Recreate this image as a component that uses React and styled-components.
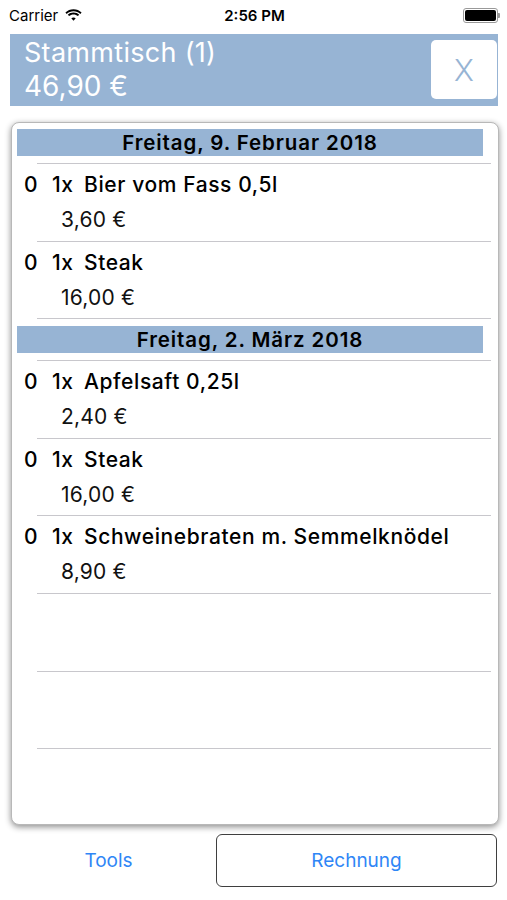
import React from 'react'
import styled, { createGlobalStyle } from 'styled-components'

const GlobalStyle = createGlobalStyle`
  body {
    margin: 0;
    background: #ffffff;
    font-family: Inter, "Liberation Sans", sans-serif;
  }
`;

const BLUE = "#97b4d4";

const sections = [
  {
    date: "Freitag, 9. Februar 2018",
    items: [
      { name: "Bier vom Fass 0,5l", price: "3,60 €" },
      { name: "Steak", price: "16,00 €" },
    ],
  },
  {
    date: "Freitag, 2. März 2018",
    items: [
      { name: "Apfelsaft 0,25l", price: "2,40 €" },
      { name: "Steak", price: "16,00 €" },
      { name: "Schweinebraten m. Semmelknödel", price: "8,90 €" },
    ],
    empty: 3,
  },
];

const App = () => {
  return (
    <Screen>
      <GlobalStyle />
      <StatusBar>
        <Carrier>
          Carrier
          <svg width="17" height="12" viewBox="0 0 17 12">
            <path d="M8.5 2.2c2.6 0 5 1 6.8 2.7l1.3-1.4C14.5 1.4 11.6.2 8.5.2S2.5 1.4.4 3.5l1.3 1.4C3.5 3.2 5.9 2.2 8.5 2.2z" fill="#000"/>
            <path d="M8.5 5.4c1.7 0 3.2.6 4.4 1.7l1.3-1.4C12.7 4.3 10.7 3.4 8.5 3.4S4.3 4.3 2.8 5.7l1.3 1.4c1.2-1.1 2.7-1.7 4.4-1.7z" fill="#000"/>
            <path d="M8.5 8.5c.9 0 1.6.3 2.2.8l-2.2 2.5-2.2-2.5c.6-.5 1.3-.8 2.2-.8z" fill="#000"/>
          </svg>
        </Carrier>
        <Clock>2:56 PM</Clock>
        <Battery>
          <BatteryBody><BatteryFill /></BatteryBody>
          <BatteryTip />
        </Battery>
      </StatusBar>

      <TableBar>
        <TableInfo>
          <TableName>Stammtisch (1)</TableName>
          <TableTotal>46,90 €</TableTotal>
        </TableInfo>
        <CloseButton>X</CloseButton>
      </TableBar>

      <Card>
        {sections.map((s, i) => (
          <Section key={i} first={i === 0}>
            <DateHeader>{s.date}</DateHeader>
            <Rows>
              {s.items.map((it, j) => (
                <Row key={j}>
                  <ItemLine>
                    <Status>0</Status>
                    <Qty>1x</Qty>
                    <span>{it.name}</span>
                  </ItemLine>
                  <Price>{it.price}</Price>
                </Row>
              ))}
              {Array.from({ length: s.empty || 0 }).map((_, k) => (
                <Row key={"e" + k} />
              ))}
            </Rows>
          </Section>
        ))}
      </Card>

      <BottomBar>
        <ToolsButton>Tools</ToolsButton>
        <BillButton>Rechnung</BillButton>
      </BottomBar>
    </Screen>
  )
}

const Screen = styled.div`
  width: 507px;
  height: 900px;
  display: flex;
  flex-direction: column;
  overflow: hidden;
`;

const StatusBar = styled.div`
  height: 34px;
  display: grid;
  grid-template-columns: 1fr auto 1fr;
  align-items: center;
  padding: 0 7px 0 9px;
  font-size: 15px;
  color: #000;
`;

const Carrier = styled.div`
  display: flex;
  align-items: center;
  gap: 7px;
  margin-top: -4px;
`;

const Clock = styled.div`
  font-weight: 600;
  margin-top: -4px;
`;

const Battery = styled.div`
  justify-self: end;
  display: flex;
  align-items: center;
  margin-top: -4px;
`;

const BatteryBody = styled.div`
  width: 31px;
  height: 11px;
  border: 1px solid #999;
  border-radius: 3px;
  padding: 1px;
`;

const BatteryFill = styled.div`
  width: 100%;
  height: 100%;
  background: #000;
  border-radius: 2px;
`;

const BatteryTip = styled.div`
  width: 2px;
  height: 5px;
  background: #999;
  border-radius: 0 1px 1px 0;
`;

const TableBar = styled.div`
  margin: 0 9px 0 10px;
  height: 72px;
  background: ${BLUE};
  display: flex;
  justify-content: space-between;
  align-items: flex-start;
`;

const TableInfo = styled.div`
  padding: 3px 0 0 14px;
  color: #fff;
`;

const TableName = styled.div`
  font-size: 27px;
  letter-spacing: 0.3px;
  line-height: 32px;
`;

const TableTotal = styled.div`
  font-size: 28px;
  line-height: 34px;
`;

const CloseButton = styled.div`
  margin-top: 6px;
  margin-right: 1px;
  width: 66px;
  height: 59px;
  background: #fff;
  border-radius: 5px;
  display: flex;
  align-items: center;
  justify-content: center;
  color: ${BLUE};
  font-size: 30px;
  font-weight: 300;
`;

const Card = styled.div`
  margin: 16px 8px 0 11px;
  height: 701px;
  border: 1px solid #b8b8b8;
  border-radius: 8px;
  box-shadow: 0 2px 6px rgba(0, 0, 0, 0.45);
  overflow: hidden;
  background: #fff;
`;

const Section = styled.div`
  padding-top: ${p => (p.first ? "6px" : "7px")};
`;

const DateHeader = styled.div`
  margin: 0 15px 0 5px;
  height: 27px;
  background: ${BLUE};
  color: #000;
  font-size: 20.5px;
  font-weight: 600;
  letter-spacing: 0.9px;
  text-align: center;
  line-height: 27px;
`;

const Rows = styled.div`
  margin: 7px 7px 0 25px;
  border-bottom: 1px solid #c8c7cc;
`;

const Row = styled.div`
  box-sizing: border-box;
  height: 77.6px;
  border-top: 1px solid #c8c7cc;
`;

const ItemLine = styled.div`
  display: flex;
  margin-left: -13px;
  padding-top: 8px;
  font-size: 21px;
  font-weight: 500;
  letter-spacing: 0.6px;
  line-height: 26px;
  color: #000;
`;

const Status = styled.span`
  width: 28px;
`;

const Qty = styled.span`
  width: 32px;
`;

const Price = styled.div`
  margin-left: 24px;
  margin-top: 9px;
  font-size: 21px;
  letter-spacing: 0.2px;
  line-height: 26px;
  color: #111;
`;

const BottomBar = styled.div`
  display: grid;
  grid-template-columns: 195px 1fr;
  margin: 9px 10px 0 11px;
  align-items: center;
`;

const ToolsButton = styled.div`
  text-align: center;
  color: #2f86f6;
  font-size: 19px;
`;

const BillButton = styled.div`
  margin-left: 10px;
  height: 51px;
  border: 1.5px solid #3f3f3f;
  border-radius: 6px;
  display: flex;
  align-items: center;
  justify-content: center;
  color: #2f86f6;
  font-size: 19px;
`;

export default App
